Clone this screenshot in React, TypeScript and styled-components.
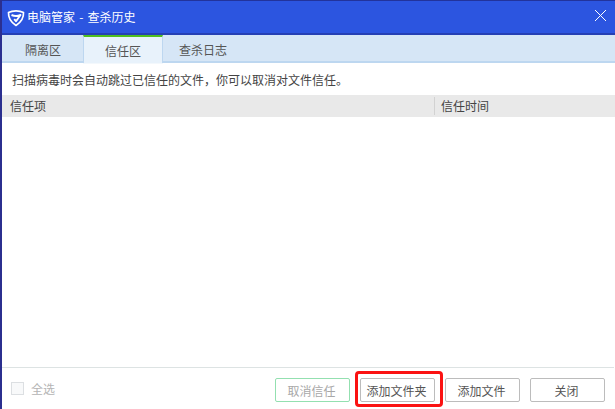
import React from "react";
import styled, { createGlobalStyle } from "styled-components";

const Global = createGlobalStyle`
  html, body { margin: 0; padding: 0; background: #fff; }
  * { box-sizing: border-box; }
`;

const Window = styled.div`
  width: 615px;
  height: 409px;
  display: flex;
  flex-direction: column;
  overflow: hidden;
  background: #fff;
  border-left: 2px solid #2b2f8f;
  font-family: "Noto Sans CJK SC", "Liberation Sans", sans-serif;
  font-size: 12px;
  color: #444;
`;

const TitleBar = styled.div`
  height: 35px;
  flex: none;
  display: flex;
  align-items: flex-start;
  padding: 8px 9px 0 5px;
  gap: 2px;
  background: #2c55e0;
  border-top: 1px solid #22339c;
  border-bottom: 2px solid #2540b4;
  color: #fff;
`;

const TitleText = styled.span`
  flex: 1;
  font-size: 12px;
  line-height: 16px;
  word-spacing: 1.5px;
`;

const Tabs = styled.div`
  height: 28px;
  flex: none;
  display: flex;
  padding-left: 1px;
  background: #d6e6f6;
  border-bottom: 2px solid #bdd7f0;
`;

const Tab = styled.div<{ $active?: boolean }>`
  width: 80px;
  height: ${(p) => (p.$active ? "28px" : "26px")};
  display: flex;
  align-items: center;
  justify-content: center;
  color: #555;
  background: ${(p) => (p.$active ? "#e8f2fb" : "transparent")};
  border-top: 2px solid ${(p) => (p.$active ? "#4fbf1f" : "transparent")};
  border-right: 1px solid ${(p) => (p.$active ? "#bdd7f0" : "transparent")};
  border-left: 1px solid ${(p) => (p.$active ? "#bdd7f0" : "transparent")};
  box-shadow: ${(p) => (p.$active ? "0 1px 0 #f3f8fc" : "none")};
`;

const Hint = styled.div`
  height: 32px;
  flex: none;
  display: flex;
  align-items: center;
  padding-left: 10px;
  color: #444;
`;

const TableHead = styled.div`
  height: 22px;
  flex: none;
  display: flex;
  align-items: center;
  background: #e9e9e9;
  color: #444;
`;

const ColA = styled.div`
  width: 432px;
  padding: 0 0 2px 8px;
`;

const ColB = styled.div`
  height: 18px;
  display: flex;
  align-items: center;
  padding: 0 0 2px 6px;
  border-left: 1px solid #d2d2d2;
`;

const TableBody = styled.div`
  flex: 1;
`;

const Footer = styled.div`
  height: 42px;
  flex: none;
  display: flex;
  align-items: flex-start;
  margin-right: 1px;
  padding: 10px 9px 0 9px;
  border-top: 1px solid #dde3e3;
`;

const SelectAll = styled.label`
  flex: 1;
  height: 21px;
  display: flex;
  align-items: center;
  gap: 7px;
  color: #b4b4b4;
`;

const Check = styled.span`
  width: 13px;
  height: 13px;
  background: #f8f9fa;
  border: 1px solid #dcdfe2;
`;

const Buttons = styled.div`
  display: flex;
  gap: 10px;
`;

const Button = styled.button<{ $disabled?: boolean }>`
  width: 75px;
  height: 24px;
  padding: 0 2px 0 0;
  background: #fff;
  border: 1px solid ${(p) => (p.$disabled ? "#93e0b0" : "#bcbcbc")};
  border-radius: 2px;
  color: ${(p) => (p.$disabled ? "#a8a8a8" : "#555")};
  font: inherit;
`;

const Highlight = styled.div`
  position: relative;
`;

const RedFrame = styled.div`
  position: absolute;
  left: -5px;
  top: -7px;
  width: 88px;
  height: 36px;
  border: 3px solid #fb1212;
  border-radius: 4px;
  pointer-events: none;
`;

const CloseSvg = styled.svg`
  margin-top: 1px;
`;

const Shield = () => (
  <svg width="18" height="18" viewBox="0 0 18 18" fill="none">
    <path d="M9 1.800c2.700 0 5.400.5 7.500 1.600.3 5.400-2.400 9.900-7.500 13C3.900 13.300 1.200 8.800 1.500 3.400 3.600 2.300 6.300 1.800 9 1.800z" stroke="#fff" strokeWidth="1.700" strokeLinejoin="round" />
    <path d="M4.500 6C7.400 7.200 10.600 7.200 13.500 6L9 12.200 7.200 10.100" stroke="#fff" strokeWidth="1.900" strokeLinejoin="round" />
  </svg>
);

const CloseIcon = () => (
  <CloseSvg width="11" height="11" viewBox="0 0 11 11">
    <path d="M0 0 L11 11 M11 0 L0 11" stroke="#fff" strokeWidth="1" />
  </CloseSvg>
);

export default function App() {
  return (
    <Window>
      <Global />
      <TitleBar>
        <Shield />
        <TitleText>电脑管家 - 查杀历史</TitleText>
        <CloseIcon />
      </TitleBar>
      <Tabs>
        <Tab>隔离区</Tab>
        <Tab $active>信任区</Tab>
        <Tab>查杀日志</Tab>
      </Tabs>
      <Hint>扫描病毒时会自动跳过已信任的文件，你可以取消对文件信任。</Hint>
      <TableHead>
        <ColA>信任项</ColA>
        <ColB>信任时间</ColB>
      </TableHead>
      <TableBody />
      <Footer>
        <SelectAll>
          <Check />
          全选
        </SelectAll>
        <Buttons>
          <Button $disabled>取消信任</Button>
          <Highlight>
            <Button>添加文件夹</Button>
            <RedFrame />
          </Highlight>
          <Button>添加文件</Button>
          <Button>关闭</Button>
        </Buttons>
      </Footer>
    </Window>
  );
}
